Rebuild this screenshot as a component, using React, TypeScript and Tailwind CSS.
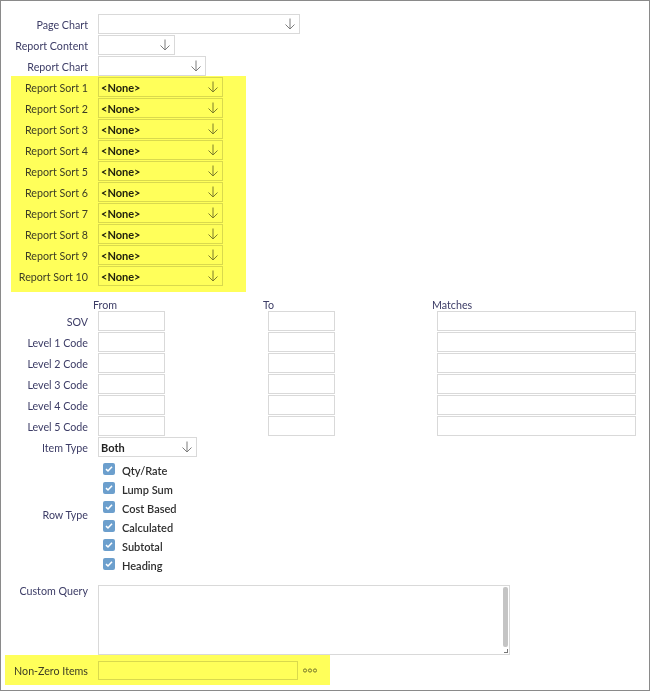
import React from "react";

const labelCls = "w-[87px] shrink-0 text-right text-[10.7px] leading-[13px] text-[#3c3c66]";

const Arrow = () => (
  <svg width="12" height="12" viewBox="0 0 12 12" className="shrink-0">
    <path d="M6 0.5V11M1.5 6.5L6 11L10.5 6.5" stroke="#7c7c7c" fill="none" strokeWidth="1" />
  </svg>
);

interface SelectProps {
  width: string;
  value?: string;
}

const Select: React.FC<SelectProps> = ({ width, value }) => (
  <div className={`flex h-[20px] items-center justify-between border border-[#d9d9d9] bg-white pl-[2px] pr-[3px] ${width}`}>
    <span className="text-[11px] font-bold leading-none text-[#222]">{value}</span>
    <Arrow />
  </div>
);

const Row: React.FC<{ label: string; children: React.ReactNode }> = ({ label, children }) => (
  <div className="mb-px flex h-[20px] items-center">
    <div className={labelCls}>{label}</div>
    <div className="ml-[10px] flex">{children}</div>
  </div>
);

const TextBox: React.FC<{ width: string }> = ({ width }) => (
  <div className={`h-[20px] border border-[#d9d9d9] bg-white ${width}`} />
);

const Check = () => (
  <div className="mb-[4px] flex h-[12px] w-[12px] items-center justify-center rounded-[2px] bg-[#6c9fcd]">
    <svg width="8" height="8" viewBox="0 0 8 8">
      <path d="M1 4.2L3 6L7 1.8" stroke="white" strokeWidth="1.6" fill="none" />
    </svg>
  </div>
);

const sorts = [1, 2, 3, 4, 5, 6, 7, 8, 9, 10];
const levels = ["SOV", "Level 1 Code", "Level 2 Code", "Level 3 Code", "Level 4 Code", "Level 5 Code"];
const rowTypes = ["Qty/Rate", "Lump Sum", "Cost Based", "Calculated", "Subtotal", "Heading"];

export default function App() {
  return (
    <div className="h-[691px] w-[650px] border border-[#8a8a8a] bg-white pt-[13px] font-[Lato,sans-serif]">
      <Row label="Page Chart">
        <Select width="w-[202px]" />
      </Row>
      <Row label="Report Content">
        <Select width="w-[77px]" />
      </Row>
      <Row label="Report Chart">
        <Select width="w-[108px]" />
      </Row>

      <div className="relative">
        {sorts.map((n) => (
          <Row key={n} label={`Report Sort ${n}`}>
            <Select width="w-[125px]" value="<None>" />
          </Row>
        ))}
        <div className="pointer-events-none absolute left-[10px] top-[-1px] z-10 h-[216px] w-[235px] bg-[#ffff5a] mix-blend-multiply" />
      </div>

      <div className="flex h-[24px] items-end text-[10.7px] leading-[13px] text-[#3c3c66]">
        <div className="w-[87px] shrink-0" />
        <div className="ml-[5px] w-[170px]">From</div>
        <div className="w-[169px]">To</div>
        <div>Matches</div>
      </div>

      {levels.map((l) => (
        <Row key={l} label={l}>
          <div className="w-[170px]">
            <TextBox width="w-[67px]" />
          </div>
          <div className="w-[169px]">
            <TextBox width="w-[67px]" />
          </div>
          <TextBox width="w-[199px]" />
        </Row>
      ))}

      <Row label="Item Type">
        <Select width="w-[99px]" value="Both" />
      </Row>

      <div className="mt-[4px] flex">
        <div className={`${labelCls} self-center pb-[7px]`}>Row Type</div>
        <div className="ml-[15px] flex flex-col">
          {rowTypes.map((t) => (
            <div key={t} className="flex h-[19px] items-center gap-[7px]">
              <Check />
              <span className="text-[11px] font-semibold leading-none text-[#2e2e2e]">{t}</span>
            </div>
          ))}
        </div>
      </div>

      <div className="mt-[10px] flex">
        <div className={`${labelCls} -mt-px`}>Custom Query</div>
        <div className="relative ml-[10px] h-[70px] w-[412px] border border-[#d9d9d9] bg-white">
          <div className="absolute right-[1px] top-[1px] h-[60px] w-[5px] rounded-[2px] bg-[#c4c4c4]" />
          <div className="absolute bottom-[1px] right-[1px] h-[4px] w-[4px] border-b border-r border-[#777]" />
        </div>
      </div>

      <div className="relative h-[30px] pt-[6px]">
        <div className="flex h-[19px] items-center">
          <div className={labelCls}>Non-Zero Items</div>
          <div className="ml-[10px] h-[19px] w-[200px] border border-[#d9d9d9] bg-white" />
          <svg width="14" height="5" viewBox="0 0 14 5" className="ml-[5px]">
            <circle cx="2" cy="2.5" r="1.6" stroke="#777" fill="none" strokeWidth="1" />
            <circle cx="7" cy="2.5" r="1.6" stroke="#777" fill="none" strokeWidth="1" />
            <circle cx="12" cy="2.5" r="1.6" stroke="#777" fill="none" strokeWidth="1" />
          </svg>
        </div>
        <div className="pointer-events-none absolute left-[4px] top-0 z-10 h-[30px] w-[325px] bg-[#ffff5a] mix-blend-multiply" />
      </div>
    </div>
  );
}
